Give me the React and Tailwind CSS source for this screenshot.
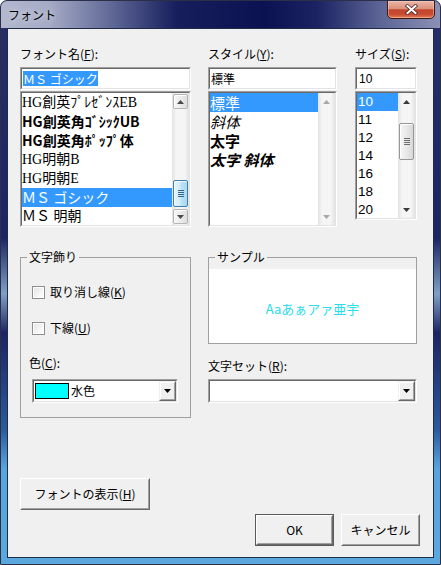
import React from "react";

const JP = "font-['Noto_Sans_CJK_JP',sans-serif]";
const SERIF = "font-['Liberation_Serif','Noto_Sans_CJK_JP',serif]";

function Tri({ up = false, color = "#000" }) {
  return (
    <svg width="7" height="4" viewBox="0 0 7 4" className="block">
      <path d={up ? "M0 4H7L3.5 0Z" : "M0 0H7L3.5 4Z"} fill={color} />
    </svg>
  );
}

function Mn({ pre, k, post = "" }) {
  return (
    <span className="whitespace-nowrap">
      {pre}(<u>{k}</u>){post}
    </span>
  );
}

function Sunken({ className = "", innerClassName = "", children }) {
  return (
    <div className={"border border-t-[#a0a0a0] border-l-[#a0a0a0] border-r-white border-b-white " + className}>
      <div className={"h-full overflow-hidden border border-t-[#696969] border-l-[#696969] border-r-[#e3e3e3] border-b-[#e3e3e3] bg-white " + innerClassName}>
        {children}
      </div>
    </div>
  );
}

function Raised({ className = "", innerClassName = "", children }) {
  return (
    <div className={"border border-t-white border-l-white border-r-[#696969] border-b-[#696969] " + className}>
      <div className={"flex h-full items-center justify-center border border-t-[#f0f0f0] border-l-[#f0f0f0] border-r-[#a0a0a0] border-b-[#a0a0a0] bg-[#f0f0f0] " + innerClassName}>
        {children}
      </div>
    </div>
  );
}

function DropBtn() {
  return (
    <div className="h-full w-[17px] shrink-0 border border-t-[#f0f0f0] border-l-[#f0f0f0] border-r-[#696969] border-b-[#696969]">
      <div className="flex h-full items-center justify-center border border-t-white border-l-white border-r-[#a0a0a0] border-b-[#a0a0a0] bg-[#f0f0f0]">
        <Tri color="#000" />
      </div>
    </div>
  );
}

function Grip({ cls }) {
  return (
    <div className="flex flex-col gap-px">
      <div className={"h-px w-[6px] " + cls} />
      <div className={"h-px w-[6px] " + cls} />
      <div className={"h-px w-[6px] " + cls} />
      <div className={"h-px w-[6px] " + cls} />
    </div>
  );
}

function AeroBtn({ up = false }) {
  return (
    <div className="h-[17px] w-[17px] shrink-0 p-px">
      <div className="flex h-full w-full items-center justify-center rounded-[2px] border border-[#b5b5b5] bg-[linear-gradient(90deg,#f7f7f7,#ececec_50%,#dedede)] shadow-[inset_1px_1px_0_#ffffff]">
        <Tri up={up} color="#4a4a4a" />
      </div>
    </div>
  );
}

const TRACK = "bg-[linear-gradient(90deg,#e3e3e3,#f5f5f5_25%,#f5f5f5_75%,#e3e3e3)]";

function FontScroll() {
  return (
    <div className={"flex w-[17px] shrink-0 flex-col " + TRACK}>
      <AeroBtn up />
      <div className="h-[70px] shrink-0" />
      <div className="h-[27px] shrink-0 px-px">
        <div className="flex h-full items-center justify-center rounded-[2px] border border-[#3c7fb1] bg-[linear-gradient(90deg,#e5f5fd,#d3ecf9_45%,#bde2f6_55%,#a9d8f1)] shadow-[inset_1px_1px_0_#f4fbff]">
          <Grip cls="bg-[#2f6690]" />
        </div>
      </div>
      <div className="h-px shrink-0" />
      <AeroBtn />
    </div>
  );
}

function StyleScroll() {
  return (
    <div className={"flex w-[17px] shrink-0 flex-col justify-between " + TRACK}>
      <div className="flex h-[17px] items-center justify-center">
        <Tri up color="#a8a8a8" />
      </div>
      <div className="flex h-[17px] items-center justify-center">
        <Tri color="#a8a8a8" />
      </div>
    </div>
  );
}

function SizeScroll() {
  return (
    <div className={"flex w-[17px] shrink-0 flex-col " + TRACK}>
      <div className="flex h-[17px] shrink-0 items-center justify-center">
        <Tri up color="#3a3a3a" />
      </div>
      <div className="h-[13px] shrink-0" />
      <div className="h-[37px] shrink-0 px-px">
        <div className="flex h-full items-center justify-center rounded-[2px] border border-[#979797] bg-[linear-gradient(90deg,#f6f6f6,#e9e9e9_50%,#d8d8d8)] shadow-[inset_1px_1px_0_#ffffff]">
          <Grip cls="bg-[#6e6e6e]" />
        </div>
      </div>
      <div className="flex-1" />
      <div className="flex h-[17px] shrink-0 items-center justify-center">
        <Tri color="#3a3a3a" />
      </div>
    </div>
  );
}

function Check() {
  return (
    <div className="h-[13px] w-[13px] shrink-0 border border-[#8e8f8f] bg-white p-px">
      <div className="h-full w-full bg-[linear-gradient(135deg,#e6e6e6,#ffffff)]" />
    </div>
  );
}

function CloseBtn() {
  return (
    <div className="-mt-px mr-[5px] flex h-[19px] w-[48px] items-center justify-center rounded-b-[5px] border border-[#3f1810] bg-[linear-gradient(180deg,#eab6a8_0%,#dc917c_45%,#c3452c_52%,#c84b31_78%,#e27c58_100%)] shadow-[inset_0_0_0_1px_rgba(255,215,200,0.45)]">
      <svg width="13" height="11" viewBox="0 0 13 11" className="block">
        <path d="M2.5 2 L10.5 9 M10.5 2 L2.5 9" stroke="#4a2a2a" strokeWidth="3.6" strokeLinecap="square" />
        <path d="M2.5 2 L10.5 9 M10.5 2 L2.5 9" stroke="#ffffff" strokeWidth="2" strokeLinecap="square" />
      </svg>
    </div>
  );
}

const fonts = [
  { t: "HG創英ﾌﾟﾚｾﾞﾝｽEB", c: SERIF },
  { t: "HG創英角ｺﾞｼｯｸUB", c: JP + " font-bold" },
  { t: "HG創英角ﾎﾟｯﾌﾟ体", c: JP + " font-bold" },
  { t: "HG明朝B", c: SERIF },
  { t: "HG明朝E", c: SERIF },
  { t: "ＭＳ ゴシック", c: JP, sel: true },
  { t: "ＭＳ 明朝", c: SERIF },
];

const styles = [
  { t: "標準", c: "", sel: true },
  { t: "斜体", c: "italic" },
  { t: "太字", c: "font-bold" },
  { t: "太字 斜体", c: "font-bold italic" },
];

const sizes = ["10", "11", "12", "14", "16", "18", "20"];

export default function App() {
  return (
    <div className={"h-[565px] w-[441px] text-[12px] text-black " + JP}>
      <div className="flex h-full w-full flex-col overflow-hidden rounded-t-[7px] border border-[#2b3048] bg-[linear-gradient(180deg,#262e6a_0%,#1c2464_42%,#7fa0c4_52%,#1c2464_59%,#2a5a9a_76%,#58a4dc_83%,#5aa8de_100%)]">
        {/* title bar */}
        <div className="flex h-[27px] shrink-0 items-start justify-between bg-[linear-gradient(90deg,#b3b8cf_0%,#a5abc5_11%,#5c6494_26%,#161e5c_40%,#0b1251_60%,#1b2362_72%,#5b6395_86%,#8b91b5_100%)]">
          <div className="flex h-full items-center pl-[7px] text-[12px] leading-none [text-shadow:0_0_6px_rgba(255,255,255,0.9)]">
            フォント
          </div>
          <CloseBtn />
        </div>

        {/* body frame */}
        <div className="flex flex-1 flex-col px-[6px] pb-[6px]">
          <div className="flex flex-1 flex-col border border-[#1f2c48] bg-[#f0f0f0] pl-[12px] pr-[13px]">
            {/* top row: lists */}
            <div className="mt-[17px] flex items-start">
              {/* font name */}
              <div className="w-[171px] shrink-0">
                <div className="h-[16px] leading-[16px]">
                  <Mn pre="フォント名" k="F" post=":" />
                </div>
                <Sunken className="mt-[5px] h-[23px]" innerClassName="flex items-center pl-px">
                  <span className="bg-[#3399ff] leading-[15px] text-white">ＭＳ ゴシック</span>
                </Sunken>
                <Sunken className="mt-px h-[136px]" innerClassName="flex">
                  <div className="min-w-0 flex-1 overflow-hidden">
                    {fonts.map((f) => (
                      <div
                        key={f.t}
                        className={
                          "h-[19px] whitespace-nowrap text-[14px] leading-[19px] " +
                          f.c +
                          (f.sel ? " bg-[#3399ff] text-white" : "")
                        }
                      >
                        {f.t}
                      </div>
                    ))}
                  </div>
                  <FontScroll />
                </Sunken>
              </div>

              {/* style */}
              <div className="ml-[17px] w-[129px] shrink-0">
                <div className="h-[16px] leading-[16px]">
                  <Mn pre="スタイル" k="Y" post=":" />
                </div>
                <Sunken className="mt-[5px] h-[23px]" innerClassName="flex items-center pl-px">
                  <span>標準</span>
                </Sunken>
                <Sunken className="mt-px h-[136px]" innerClassName="flex">
                  <div className="min-w-0 flex-1 overflow-hidden">
                    {styles.map((s) => (
                      <div
                        key={s.t}
                        className={
                          "h-[19px] whitespace-nowrap text-[15px] leading-[19px] " +
                          s.c +
                          (s.sel ? " bg-[#3399ff] text-white" : "")
                        }
                      >
                        {s.t}
                      </div>
                    ))}
                  </div>
                  <StyleScroll />
                </Sunken>
              </div>

              {/* size */}
              <div className="ml-[18px] w-[62px] shrink-0">
                <div className="h-[16px] leading-[16px]">
                  <Mn pre="サイズ" k="S" post=":" />
                </div>
                <Sunken className="mt-[5px] h-[23px]" innerClassName="flex items-center pl-[2px] font-['Liberation_Sans',sans-serif] text-[12px]">
                  <span>10</span>
                </Sunken>
                <Sunken className="mt-px h-[129px]" innerClassName="flex">
                  <div className="min-w-0 flex-1 overflow-hidden font-['Liberation_Sans',sans-serif] text-[13.5px]">
                    {sizes.map((s, i) => (
                      <div
                        key={s}
                        className={
                          "h-[18px] pl-px leading-[18px] " + (i === 0 ? "bg-[#3399ff] text-white" : "")
                        }
                      >
                        {s}
                      </div>
                    ))}
                  </div>
                  <SizeScroll />
                </Sunken>
              </div>
            </div>

            {/* middle row: groups */}
            <div className="mt-[22px] flex items-start">
              <fieldset className="w-[171px] min-w-0 shrink-0 border border-[#a0a0a0]">
                <legend className="ml-[6px] px-[2px] leading-[16px]">文字飾り</legend>
                <div className="pb-[14px] pl-[8px] pr-[12px] pt-[19px]">
                  <div className="flex h-[16px] items-center pl-[3px]">
                    <Check />
                    <span className="ml-[5px] leading-[16px]">
                      <Mn pre="取り消し線" k="K" />
                    </span>
                  </div>
                  <div className="mt-[20px] flex h-[16px] items-center pl-[3px]">
                    <Check />
                    <span className="ml-[5px] leading-[16px]">
                      <Mn pre="下線" k="U" />
                    </span>
                  </div>
                  <div className="mt-[19px] h-[16px] leading-[16px]">
                    <Mn pre="色" k="C" post=":" />
                  </div>
                  <Sunken className="ml-[3px] mt-[8px] h-[24px]" innerClassName="flex items-center">
                    <div className="ml-px h-[16px] w-[34px] shrink-0 border border-black bg-[#00ffff]" />
                    <span className="ml-[2px] flex-1">水色</span>
                    <DropBtn />
                  </Sunken>
                </div>
              </fieldset>

              <div className="ml-[17px] w-[209px] shrink-0">
                <fieldset className="min-w-0 border border-[#a0a0a0]">
                  <legend className="ml-[6px] px-[2px] leading-[16px]">サンプル</legend>
                  <div className="pt-[4px]">
                    <div className="flex h-[74px] items-center justify-center bg-white pt-[5px] text-[13px] text-[#2adcec]">
                      Aaあぁアァ亜宇
                    </div>
                  </div>
                </fieldset>
                <div className="mt-[14px] h-[16px] leading-[16px]">
                  <Mn pre="文字セット" k="R" post=":" />
                </div>
                <Sunken className="mt-[5px] h-[24px]" innerClassName="flex justify-end">
                  <DropBtn />
                </Sunken>
              </div>
            </div>

            {/* buttons */}
            <Raised className="mt-[60px] h-[32px] w-[130px]">
              <span className="whitespace-nowrap">
                フォントの表示(<u>H</u>)
              </span>
            </Raised>
            <div className="mt-[4px] flex justify-end gap-[7px]">
              <div className="border border-[#5a5a5a]">
                <Raised className="h-[30px] w-[77px]">OK</Raised>
              </div>
              <Raised className="h-[32px] w-[79px]">キャンセル</Raised>
            </div>
          </div>
        </div>
      </div>
    </div>
  );
}
